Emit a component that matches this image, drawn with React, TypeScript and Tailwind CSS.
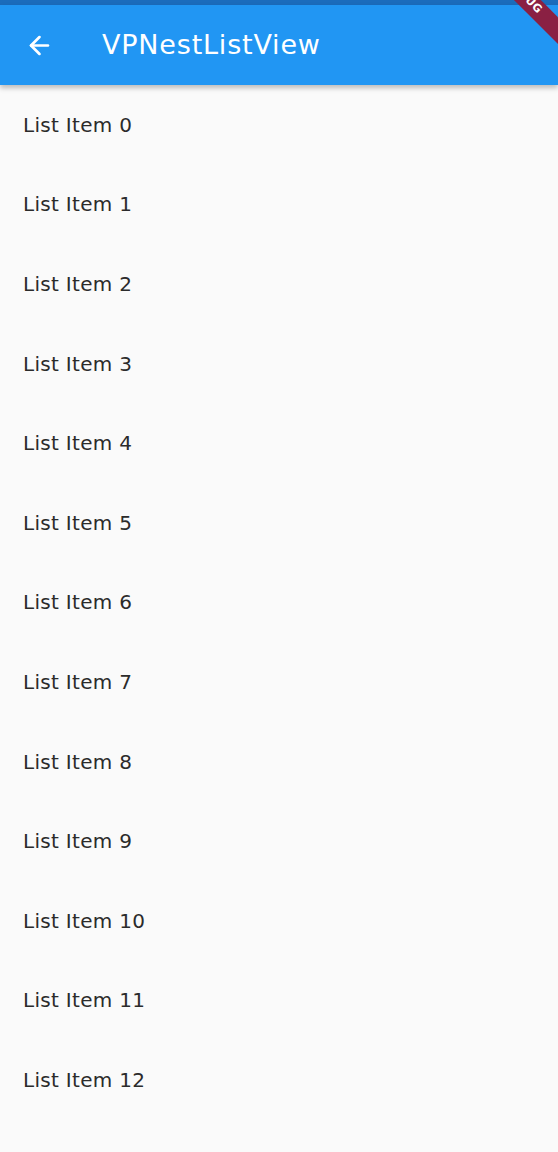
import { ArrowLeft } from 'lucide-react';

const items = Array.from({ length: 14 }, (_, i) => `List Item ${i}`);

export default function App() {
  return (
    <div className="relative h-[1152px] w-[558px] overflow-hidden bg-[#fafafa] font-['DejaVu_Sans',sans-serif]">
      {/* status bar */}
      <div className="h-[5px] bg-[#1b6cbc]" />

      {/* app bar */}
      <header className="relative z-10 flex h-[80px] items-center bg-[#2196f3] shadow-[0_3px_5px_rgba(0,0,0,0.25)]">
        <div className="flex w-[102px] items-center pl-[25px]">
          <ArrowLeft className="h-[29px] w-[29px] text-white" strokeWidth={2.2} />
        </div>
        <h1 className="text-[27px] font-normal tracking-[0.8px] text-white">VPNestListView</h1>
      </header>

      {/* list */}
      <main>
        {items.map((label) => (
          <div key={label} className="flex h-[79.6px] items-center pl-[23px]">
            <span className="text-[20px] tracking-[0.3px] text-[#2b2b2b]">{label}</span>
          </div>
        ))}
      </main>

      {/* debug banner */}
      <div className="absolute right-[-26px] top-[-13px] z-20 w-[120px] rotate-45 bg-[#8a2043] py-[1px] text-center text-[11px] font-bold tracking-wide text-white">
        DEBUG
      </div>
    </div>
  );
}
